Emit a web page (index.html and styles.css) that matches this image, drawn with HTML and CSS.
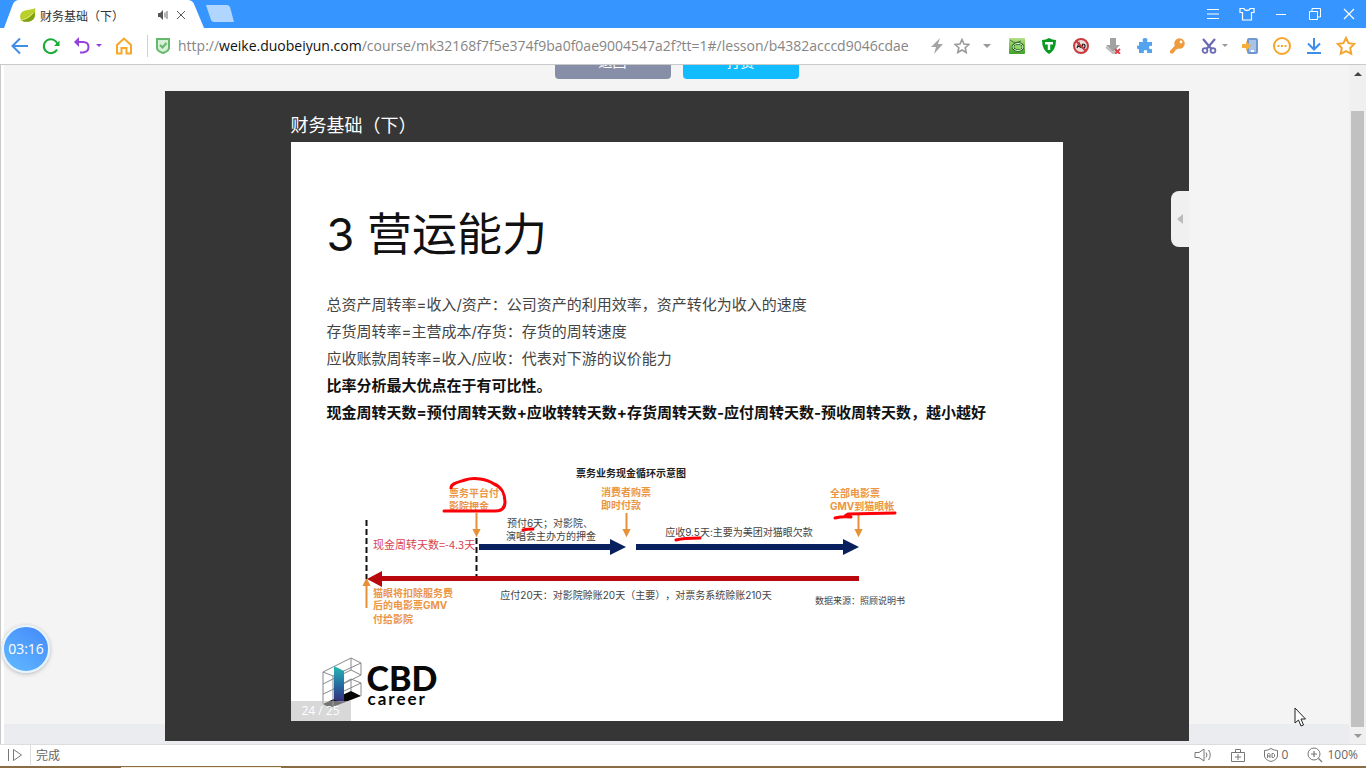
FILE: index.html
```html
<!DOCTYPE html>
<html lang="zh-CN">
<head>
<meta charset="utf-8">
<title>财务基础（下）</title>
<link rel="stylesheet" href="styles.css">
</head>
<body>
<div class="browser">
  <header class="tabbar">
    <div class="tab">
      <svg class="tab-shape" viewBox="0 0 202 28" preserveAspectRatio="none" aria-hidden="true"><path d="M0 28 9 4Q11 0 15 0H184Q188 0 190 4L200 28Z" fill="#fff"/></svg>
      <svg class="leaf" viewBox="0 0 16 14" width="16" height="14" aria-hidden="true"><path d="M15.500 0C13 2 6 1 2 4-1 7 0 11 2 13 6 14 12 14 14.500 10 16 7 14.500 3 15.500 0Z" fill="#b9cf2a"/><path d="M1 12C6 12 11 9 14.500 4 15.500 8 14 12 10 13.500 6 14 3 14 1 12Z" fill="#7fa00f"/><path d="M0 13C5 11 10 9 13 5" fill="none" stroke="#dfe985"/></svg>
      <span class="tab-title">财务基础（下）</span>
      <button class="icon-btn" aria-label="静音"><svg viewBox="0 0 12 12" width="12" height="12"><path d="M1 4h2l3-3v10L3 8H1Z" fill="#555"/><path d="M8 3.500v5M10 2v8" stroke="#666" fill="none"/></svg></button>
      <button class="icon-btn tab-close" aria-label="关闭标签"><svg viewBox="0 0 10 10" width="10" height="10"><path d="M1 1 9 9M9 1 1 9" stroke="#555" fill="none"/></svg></button>
    </div>
    <button class="icon-btn new-tab" aria-label="新标签页"><svg viewBox="0 0 28 18" width="28" height="18"><path d="M0 0H21Q23 0 24 2L28 17H8Q6 17 5 15Z" fill="#b0d6ff"/></svg></button>
    <div class="window-buttons">
      <button class="icon-btn" aria-label="菜单"><svg viewBox="0 0 14 12" width="14" height="12"><path d="M1 1.500H13M1 6H13M1 10.500H13" stroke="#fff" fill="none"/></svg></button>
      <button class="icon-btn" aria-label="皮肤"><svg viewBox="0 0 16 14" width="16" height="14"><path d="M1 1.500H5C5 4 11 4 11 1.500H15V5.500H12.500V13H3.500V5.500H1Z" stroke="#fff" stroke-width="1.200" fill="none"/></svg></button>
      <button class="icon-btn" aria-label="最小化"><svg viewBox="0 0 12 12" width="12" height="12"><path d="M1 6.500H11" stroke="#fff"/></svg></button>
      <button class="icon-btn" aria-label="还原"><svg viewBox="0 0 12 12" width="12" height="12"><path d="M.5 3.500H8.500V11.500H.5ZM3 3V.5H11.500V9H9" stroke="#fff" fill="none"/></svg></button>
      <button class="icon-btn" aria-label="关闭"><svg viewBox="0 0 12 12" width="12" height="12"><path d="M1 1 11 11M11 1 1 11" stroke="#fff" stroke-width="1.200"/></svg></button>
    </div>
  </header>

  <nav class="toolbar">
    <div class="nav-buttons">
      <button class="icon-btn" aria-label="后退"><svg viewBox="0 0 18 18" width="18" height="18"><path d="M17 9H2M9 1.500 1.500 9 9 16.500" stroke="#3f8fe8" stroke-width="2" fill="none"/></svg></button>
      <button class="icon-btn" aria-label="刷新"><svg viewBox="0 0 18 18" width="18" height="18"><path d="M15.500 7A7 7 0 1 0 15 12.500" stroke="#19ab35" stroke-width="2" fill="none"/><path d="M17.500 3.500V9H12Z" fill="#19ab35"/></svg></button>
      <span class="undo">
        <button class="icon-btn" aria-label="恢复"><svg viewBox="0 0 18 18" width="18" height="18"><path d="M3 5H10Q15.500 5 15.500 10T10 15.500H7" stroke="#9640de" stroke-width="2" fill="none"/><path d="M1 5 6 0V10Z" fill="#9640de"/></svg></button>
        <button class="icon-btn" aria-label="恢复列表"><svg viewBox="0 0 6 4" width="6" height="4"><path d="M0 0H6L3 3Z" fill="#9640de"/></svg></button>
      </span>
      <button class="icon-btn" aria-label="主页"><svg viewBox="0 0 18 18" width="18" height="18"><path d="M2 8 9 1.500 16 8V16.500H11.500V11H6.500V16.500H2Z" stroke="#f7a829" stroke-width="2" fill="none"/></svg></button>
    </div>
    <div class="address">
      <svg class="shield" viewBox="0 0 14 16" width="14" height="16" aria-hidden="true"><path d="M1 1H13V10Q13 13 7 15 1 13 1 10Z" fill="#d8efd8" stroke="#65b96b" stroke-width="2"/><path d="M4 7 6.500 9.500 10.500 5" stroke="#65b96b" stroke-width="2" fill="none"/></svg>
      <div class="url" role="textbox" contenteditable="true" aria-label="网址" spellcheck="false">http://<b>weike.duobeiyun.com</b>/course/mk32168f7f5e374f9ba0f0ae9004547a2f?tt=1#/lesson/b4382acccd9046cdae</div>
      <button class="icon-btn bolt" aria-label="加速"><svg viewBox="0 0 12 16" width="12" height="16"><path d="M9 0 0 9H5L3 16 12 6H7Z" fill="#a4a4a4"/></svg></button>
      <button class="icon-btn" aria-label="收藏此页"><svg viewBox="0 0 16 16" width="16" height="16"><path d="m8 1.500 2 4.500 4.800.5-3.600 3.200 1 4.800L8 12l-4.200 2.500 1-4.800L1.200 6.500 6 6Z" stroke="#999" stroke-width="1.600" fill="none"/></svg></button>
      <button class="icon-btn more" aria-label="展开"><svg viewBox="0 0 8 5" width="8" height="5"><path d="M0 0H8L4 4Z" fill="#999"/></svg></button>
    </div>
    <div class="extensions">
      <button class="icon-btn" aria-label="视频"><svg viewBox="0 0 16 16" width="16" height="16"><defs><linearGradient id="gg" x2="0" y2="1"><stop stop-color="#b7e08a"/><stop offset=".5" stop-color="#7cc04e"/><stop offset="1" stop-color="#3f9f2b"/></linearGradient></defs><rect width="16" height="16" rx="1" fill="url(#gg)"/><path d="M1 2 6 5 12 3" stroke="#44763f" fill="none"/><ellipse cx="9" cy="9" rx="5" ry="3.500" fill="#8fd467" stroke="#225f20" stroke-width="2.400"/><ellipse cx="9" cy="9" rx="5" ry="3.500" fill="none" stroke="#f3ffe9"/></svg></button>
      <button class="icon-btn" aria-label="翻译"><svg viewBox="0 0 16 16" width="16" height="16"><path d="M1 2Q5 2 8 0 11 2 15 2 15 12 8 16 1 12 1 2Z" fill="#0b9a21"/><path d="M4 4H12V6.500H9.200V12H6.800V6.500H4Z" fill="#fff"/></svg></button>
      <button class="icon-btn" aria-label="广告拦截"><svg viewBox="0 0 16 16" width="16" height="16"><circle cx="8" cy="8" r="7" fill="#eadede" stroke="#ca393c" stroke-width="2"/><path d="M4 10 6 5 7.500 10M4.500 8.500H7M9.500 6V10Q12.500 10 12 8 12 6 9.500 6" fill="none" stroke="#222" stroke-width="1.200"/><path d="M3 3 13 13" stroke="#ca393c" stroke-width="2"/></svg></button>
      <button class="icon-btn" aria-label="下载视频"><svg viewBox="0 0 16 16" width="16" height="16"><path d="M5 0H11V7H15L8 14 1 7H5Z" fill="#a2a2a2"/><path d="M1 9 8 15 12 12" stroke="#bbb" stroke-width="2" fill="none"/><path d="M10 11 15 16M15 11 10 16" stroke="#dd4048" stroke-width="1.800"/></svg></button>
      <button class="icon-btn" aria-label="扩展"><svg viewBox="0 0 16 16" width="16" height="16"><path d="M2 4H6Q4.500 0 8 0T10 4H15V8Q12 7 12 9.500T15 11V15H10Q11 12 8.500 12T7 15H2V11Q0 12 0 9T2 8Z" fill="#55a3ee"/></svg></button>
      <button class="icon-btn" aria-label="密码"><svg viewBox="0 0 16 16" width="16" height="16"><path d="M7 7 1.500 13V15H4L5 13H6V11H8L10 9" fill="#ed9b3c" stroke="#ed9b3c"/><circle cx="10.500" cy="5.500" r="5.200" fill="#ed9b3c"/><circle cx="12" cy="4" r="1.400" fill="#fff"/></svg></button>
      <span class="scissors">
        <button class="icon-btn" aria-label="截图"><svg viewBox="0 0 16 16" width="16" height="16"><path d="M2 1 10.500 11M14 1 5.500 11" stroke="#6a69b4" stroke-width="2.200"/><circle cx="4" cy="12.500" r="2.400" fill="none" stroke="#6a69b4" stroke-width="1.800"/><circle cx="12" cy="12.500" r="2.400" fill="none" stroke="#6a69b4" stroke-width="1.800"/></svg></button>
        <button class="icon-btn caret" aria-label="截图选项"><svg viewBox="0 0 6 4" width="6" height="4"><path d="M0 0H6L3 3Z" fill="#999"/></svg></button>
      </span>
      <button class="icon-btn" aria-label="发送到手机"><svg viewBox="0 0 16 16" width="16" height="16"><rect x="6" y="1" width="9" height="14" rx="1" fill="#a9c3e6" stroke="#6f98cf" stroke-width="2"/><path d="M9 13H12" stroke="#fff" stroke-width="2"/><path d="M0 6H4V3L9 8 4 13V10H0Z" fill="#f5ad3b"/></svg></button>
      <button class="icon-btn" aria-label="更多"><svg viewBox="0 0 18 18" width="18" height="18"><circle cx="9" cy="9" r="8" fill="none" stroke="#f5a52d" stroke-width="2"/><path d="M4.500 9H6.500M8 9H10M11.500 9H13.500" stroke="#f5a52d" stroke-width="2"/></svg></button>
      <button class="icon-btn" aria-label="下载"><svg viewBox="0 0 16 16" width="16" height="16"><path d="M8 0V11M2 5.500 8 11.500 14 5.500M1 15H15" stroke="#3c8fe9" stroke-width="2" fill="none"/></svg></button>
      <button class="icon-btn" aria-label="收藏夹"><svg viewBox="0 0 20 20" width="20" height="20"><path d="m10 2 2.600 5.200 5.600.8-4 4 1 5.800-5.200-2.700-5.200 2.700 1-5.800-4-4 5.600-.8Z" stroke="#f5a52d" stroke-width="2" fill="none"/></svg></button>
    </div>
  </nav>

  <div class="viewport">
    <main class="page">
      <div class="actions">
        <button class="action back">返回</button>
        <button class="action reward">打赏</button>
      </div>
      <section class="player">
        <h1 class="lesson-title">财务基础（下）</h1>
        <article class="slide">
          <h2>3 营运能力</h2>
          <div class="notes">
            <p>总资产周转率=收入/资产：公司资产的利用效率，资产转化为收入的速度</p>
            <p>存货周转率=主营成本/存货：存货的周转速度</p>
            <p>应收账款周转率=收入/应收：代表对下游的议价能力</p>
            <p class="strong">比率分析最大优点在于有可比性。</p>
            <p class="strong">现金周转天数=预付周转天数+应收转转天数+存货周转天数-应付周转天数-预收周转天数，越小越好</p>
          </div>
          <svg class="diagram" viewBox="340 460 600 175" role="img" aria-label="票务业务现金循环示意图">
            <text class="d-title" x="631" y="477">票务业务现金循环示意图</text>
            <g class="d-orange">
              <text x="449" y="497">票务平台付</text><text x="449" y="510">影院押金</text>
              <text x="601" y="496">消费者购票</text><text x="601" y="509">即时付款</text>
              <text x="830" y="497">全部电影票</text><text x="830" y="510">GMV到猫眼帐</text>
              <text x="373" y="597">猫眼将扣除服务费</text><text x="373" y="609">后的电影票GMV</text><text x="373" y="623">付给影院</text>
            </g>
            <g fill="#e69138" stroke="#e69138" stroke-width="2">
              <path d="M476.500 513V531M474 530H479L476.500 535ZM626.500 513V531M624 530H629L626.500 535ZM858.500 514V531M856 530H861L858.500 535ZM366.500 608V584M364 585H369L366.500 580Z"/>
            </g>
            <path d="M366.500 520V579M476.500 538V581" stroke="#111" stroke-width="2" stroke-dasharray="6 3" fill="none"/>
            <path d="M479 544H610V539L626 547 610 555V550H479ZM636 544H843V539L859 547 843 555V550H636Z" fill="#08205d"/>
            <path d="M859 576H382V571L367 579 382 587V581H859Z" fill="#b9070e"/>
            <g class="d-text">
              <text x="550" y="527">预付6天；对影院、</text><text x="551" y="540">演唱会主办方的押金</text>
              <text x="739" y="536">应收9.5天:主要为美团对猫眼欠款</text>
              <text x="636" y="599">应付20天：对影院赊账20天（主要），对票务系统赊账210天</text>
            </g>
            <text class="d-red" x="373" y="549">现金周转天数=-4.3天</text>
            <text class="d-source" x="815" y="604">数据来源：照顾说明书</text>
            <path d="M451 488C451 483 459 482 465 480 474 477 487 479 494 484 502 487 505 495 505 502 505 509 501 511 495 511H444M523 530Q527 529 533 529M676 540Q683 538 700 538M835 518Q843 516 851 517M845 516 848 514 895 513" fill="none" stroke="#fb0007" stroke-width="3" stroke-linecap="round" stroke-linejoin="round"/>
          </svg>
          <div class="brand">
            <svg class="brand-mark" viewBox="0 0 42 52" width="42" height="52" aria-hidden="true">
              <defs><linearGradient id="teal" x2="0" y2="1"><stop stop-color="#27b9b2"/><stop offset=".55" stop-color="#2565a0"/><stop offset="1" stop-color="#382976"/></linearGradient></defs>
              <path d="M1 47 29 34 39 39 8 51Z" fill="#050505"/>
              <path d="M1 15 29 1 39 6V18L11 32M1 15 11 19 39 6M1 15V47M11 19V50M29 1V13L39 18M29 13 1 27M29 22 39 26V39M29 22 22 26M39 26 22 34M29 22V34M1 37 12 32" fill="none" stroke="#85898c"/>
              <path d="M12 9 22 14V46L12 43Z" fill="url(#teal)"/>
            </svg>
            <div class="brand-name"><strong>CBD</strong><span>career</span></div>
          </div>
          <span class="page-number">24 / 25</span>
        </article>
        <button class="drawer" aria-label="展开侧栏"><svg viewBox="0 0 6 10" width="6" height="10"><path d="M6 0V10L0 5Z" fill="#bcbcbc"/></svg></button>
      </section>
      <footer class="page-footer"></footer>
    </main>
    <div class="scrollbar" aria-hidden="true">
      <svg viewBox="0 0 8 4" width="8" height="4"><path d="M0 4H8L4 0Z" fill="#444"/></svg>
      <div class="thumb"></div>
      <svg viewBox="0 0 8 4" width="8" height="4"><path d="M0 0H8L4 4Z" fill="#999"/></svg>
    </div>
    <div class="timer">03:16</div>
    <svg class="pointer" viewBox="0 0 12 20" width="12" height="20" aria-hidden="true"><path d="M1 1V16L4.500 13 7 19 9.500 18 7 12H11.500Z" fill="#fff" stroke="#222"/></svg>
  </div>

  <footer class="statusbar">
    <button class="icon-btn side-toggle" aria-label="侧栏"><svg viewBox="0 0 16 14" width="16" height="14"><path d="M1.500 1V13M6.500 1.500V12.500L14.500 7Z" stroke="#777" fill="none"/></svg></button>
    <span class="status-text">完成</span>
    <div class="status-tools">
      <button class="icon-btn" aria-label="声音"><svg viewBox="0 0 18 14" width="18" height="14"><path d="M1 4.500H5L10 1V13L5 9.500H1ZM12 4.500Q14 7 12 9.500M14.500 2Q18 7 14.500 12" stroke="#777" fill="none"/></svg></button>
      <button class="icon-btn" aria-label="工具箱"><svg viewBox="0 0 14 14" width="14" height="14"><path d="M.5 4.500H13.500V13.500H.5ZM4.500 4V1.500H9.500V4M4 9H10M7 6V12" stroke="#777" fill="none"/></svg></button>
      <button class="status-btn"><svg viewBox="0 0 14 14" width="14" height="14" aria-hidden="true"><path d="M.5 2.500Q4 2.500 7 .5 10 2.500 13.500 2.500V8Q13 12 7 13.500 1 12 .5 8Z" stroke="#777" fill="none"/><path d="M3.500 10V6.500L4.500 5 6 6.500V10M3.500 8H6M8 5.500V9.500H9.500L10.500 8.500V6.500L9.500 5.500H8" stroke="#777" fill="none"/></svg>0</button>
      <button class="status-btn"><svg viewBox="0 0 16 16" width="16" height="16" aria-hidden="true"><circle cx="7" cy="7" r="6" stroke="#777" fill="none"/><path d="M11.500 11.500 15 15M4 7H10M7 4V10" stroke="#777" stroke-width="1.200"/></svg>100%</button>
    </div>
  </footer>
  <div class="desktop-edge"><span></span></div>
</div>
</body>
</html>
```
FILE: styles.css
```css
* { box-sizing: border-box; }
body {
  margin: 0;
  font-family: "Open Sans", "Noto Sans CJK SC", sans-serif;
  font-size: 12px;
  color: #333;
  background: #fff;
  text-spacing-trim: space-all;
}
.browser { display: flex; flex-direction: column; height: 100vh; overflow: hidden; }
button { font: inherit; color: inherit; }
svg { display: block; flex: none; }
.icon-btn {
  display: flex; align-items: center; justify-content: center;
  padding: 0; border: 0; background: none;
}

.tabbar { display: flex; height: 28px; flex: none; background: #3795ff; }
.tab {
  position: relative; display: flex; align-items: center;
  width: 202px; margin-left: 4px; padding: 2px 20px 0 16px;
}
.tab > * { position: relative; }
.tab > .tab-shape { position: absolute; inset: 0; width: 100%; height: 100%; }
.tab-title { flex: 1; padding-left: 4px; font-family: "Noto Sans CJK SC", sans-serif; white-space: nowrap; }
.tab-close { margin-left: 7px; }
.new-tab { align-self: center; }
.window-buttons { display: flex; align-items: center; gap: 18px; margin-left: auto; padding-right: 9px; }
.window-buttons .icon-btn { width: 16px; }

.toolbar {
  display: flex; align-items: center; height: 37px; flex: none;
  background: #fff; border-bottom: 1px solid #c9c9c9;
}
.nav-buttons {
  display: flex; align-items: center; gap: 13px; height: 22px;
  padding: 0 14px 0 11px; border-right: 1px solid #d0d0d0;
}
.undo { display: flex; align-items: center; gap: 5px; }
.address { display: flex; align-items: center; flex: 1; min-width: 0; padding-left: 8px; }
.url {
  flex: 1; min-width: 0; overflow: hidden; margin-left: 8px;
  font-size: 14px; line-height: 22px; color: #858585; white-space: nowrap; outline: 0;
}
.url b { font-weight: 400; color: #111; }
.bolt { margin: 0 11px 0 4px; }
.more { margin-left: 13px; }
.extensions { display: flex; align-items: center; gap: 12px; padding: 0 10px 0 16px; }
.extensions .icon-btn { width: 20px; }
.extensions .caret { width: 6px; }
.scissors { display: flex; align-items: center; gap: 3px; }

.viewport {
  position: relative; display: flex; flex: 1; min-height: 0; overflow: hidden;
  border-left: 1px solid #c9c9c9; background: #fff;
}
.page {
  display: flex; flex-direction: column; flex: 1; min-width: 0;
  margin-left: 3px; background: #f4f4f4;
}
.actions { display: flex; justify-content: center; gap: 12px; margin-top: -26px; }
.action {
  width: 116px; height: 40px; padding: 6px 0 0; border: 0; border-radius: 4px;
  font-size: 14px; line-height: 20px; color: #fff;
}
.back { background: #878ea8; }
.reward { background: #13bcfe; }
.player {
  position: relative; z-index: 1; width: 100%; max-width: 1024px;
  margin: 12px auto 0; padding: 20px 126px; background: #363636;
}
.lesson-title {
  margin: 0 0 4px; font-family: "Noto Sans CJK SC", sans-serif;
  font-size: 18px; font-weight: 400; line-height: 27px; color: #fff;
}
.slide {
  position: relative; padding: 60px 36px 12px; background: #fff;
  font-family: Inter, "Noto Sans CJK SC", sans-serif;
}
.slide h2 { margin: 0 0 23px; font-size: 45px; font-weight: 400; line-height: 66px; color: #111; }
.notes { font-size: 15px; line-height: 27px; color: #444; white-space: nowrap; }
.notes p { margin: 0; }
.notes .strong { font-weight: 700; color: #111; }
.diagram { width: 600px; max-width: 100%; margin: 34px 0 22px 13px; }
.d-title { font-size: 10px; font-weight: 700; fill: #222; text-anchor: middle; }
.d-orange { font-size: 10px; font-weight: 700; fill: #eb9645; }
.d-text { font-size: 10px; fill: #444; text-anchor: middle; }
.d-red { font-family: "Noto Sans CJK SC", sans-serif; font-size: 11px; fill: #d84355; }
.d-source { font-size: 9px; fill: #444; }
.brand { display: flex; gap: 3px; margin-left: -5px; }
.brand-name { display: flex; flex-direction: column; padding-top: 5px; font-family: Lato, sans-serif; color: #080808; }
.brand-name strong { font-size: 34px; font-weight: 900; line-height: 32px; }
.brand-name span { padding-left: 1px; font-size: 17px; font-weight: 700; line-height: 10px; letter-spacing: 2px; }
.page-number {
  position: absolute; left: 0; bottom: 0; width: 60px; height: 20px;
  background: rgba(190, 190, 190, 0.6); color: #fff;
  font-family: "Open Sans", sans-serif; font-size: 12px; line-height: 20px; text-align: center;
}
.drawer {
  position: absolute; right: 0; top: 100px; width: 18px; height: 56px; padding: 0 0 0 6px;
  border: 0; border-radius: 8px 0 0 8px; background: #f0f0f0;
}
.page-footer { height: 20px; margin-top: -17px; background: #ebecf0; flex: none; }
.scrollbar {
  display: flex; flex-direction: column; align-items: center; gap: 7px;
  width: 17px; padding: 7px 2px 6px; background: #f0f0f0;
}
.thumb { flex: 1; width: 100%; margin-top: 28px; background: #c1c1c1; }
.timer {
  position: absolute; left: 1px; bottom: 71px; width: 48px; height: 48px;
  border: 2px solid #e6f5ff; border-radius: 50%;
  background: linear-gradient(35deg, #62bbff, #4388fb);
  box-shadow: 0 1px 4px rgba(0, 0, 0, 0.25);
  font-size: 14px; line-height: 44px; text-align: center; color: #fff;
}
.pointer { position: absolute; right: 60px; bottom: 17px; }

.statusbar {
  display: flex; align-items: center; height: 22px; flex: none; padding-bottom: 1px;
  border-top: 1px solid #ddd; background: #fff; color: #666;
}
.side-toggle { width: 31px; height: 100%; border-right: 1px solid #ddd; }
.status-text { padding-left: 5px; }
.status-tools { display: flex; align-items: center; gap: 19px; margin-left: auto; padding-right: 8px; }
.status-btn { display: flex; align-items: center; gap: 4px; padding: 0; border: 0; background: none; font-size: 12px; line-height: 18px; }
.desktop-edge { height: 2px; flex: none; background: #8b6d45; }
.desktop-edge span { display: block; width: 160px; height: 1px; margin: 1px 0 0 121px; background: #f5edd8; }
```
